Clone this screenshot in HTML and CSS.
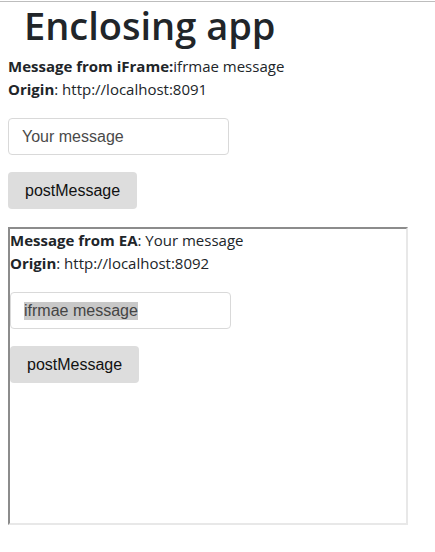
FILE: index.html
```html
<!DOCTYPE html>
<html>
<head>
<meta charset="utf-8">
<link rel="stylesheet" href="styles.css">
</head>
<body>
<div class="topline"></div>
<div class="page">
  <h1 class="title">Enclosing app</h1>
  <div class="info">
    <div><b>Message from iFrame:</b>ifrmae message</div>
    <div><b>Origin</b>: http://localhost:8091</div>
  </div>
  <input class="field" type="text" placeholder="Your message">
  <button class="btn" type="button">postMessage</button>
  <div class="frame">
    <div class="info">
      <div><b>Message from EA</b>: Your message</div>
      <div><b>Origin</b>: http://localhost:8092</div>
    </div>
    <div class="field"><span class="sel">ifrmae message</span></div>
    <button class="btn" type="button">postMessage</button>
  </div>
</div>
</body>
</html>
```
FILE: styles.css
```css
html, body {
  margin: 0;
  background: #fff;
}
body {
  font-family: "Open Sans", "Noto Sans", sans-serif;
  color: #212529;
}
.topline {
  margin-top: 1px;
  height: 1px;
  background: #bdbdbd;
}
.page {
  padding: 0 8px;
  display: flex;
  flex-direction: column;
  align-items: flex-start;
}
.title {
  margin: 0 0 7px 0;
  padding-left: 16px;
  font-size: 38px;
  line-height: 46px;
  font-weight: 600;
}
.info {
  font-size: 15px;
  line-height: 23px;
}
.info b {
  font-weight: 700;
}
.field {
  box-sizing: border-box;
  margin-top: 17px;
  width: 221px;
  height: 37px;
  border: 1px solid #d9d9d9;
  border-radius: 4px;
  padding: 0 13px;
  font-family: "Liberation Sans", Arial, sans-serif;
  font-size: 16px;
  color: #333;
  background: #fff;
  outline: none;
  display: flex;
  align-items: center;
}
.field::placeholder {
  color: #4a4a4a;
}
.sel {
  background: #c8c8c8;
  color: #444;
}
.btn {
  box-sizing: border-box;
  margin-top: 17px;
  height: 37px;
  padding: 0 17px;
  border: none;
  border-radius: 4px;
  background: #dddddd;
  font-family: "Liberation Sans", Arial, sans-serif;
  font-size: 16px;
  color: #111;
}
.frame {
  box-sizing: border-box;
  margin-top: 18px;
  width: 400px;
  height: 298px;
  border-style: solid;
  border-width: 2px;
  border-color: #8c8c8c #e8e8e8 #e8e8e8 #8c8c8c;
  display: flex;
  flex-direction: column;
  align-items: flex-start;
}
```
